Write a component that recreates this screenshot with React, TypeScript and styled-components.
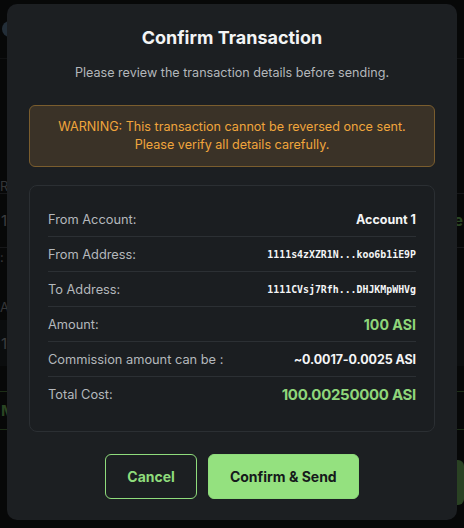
import React from 'react';
import styled, { createGlobalStyle } from 'styled-components';

const GlobalStyle = createGlobalStyle`
  html, body {
    margin: 0;
    padding: 0;
    background: #0f1113;
    font-family: Inter, 'Noto Sans', sans-serif;
  }
  * {
    box-sizing: border-box;
  }
`;

// page behind the dialog, mostly hidden
const Page = styled.div`
  width: 464px;
  height: 528px;
  background: #131517;
  overflow: hidden;
`;

const PageHeader = styled.div`
  height: 59px;
  display: flex;
  align-items: center;
  padding: 0 0 0 2px;
  border-bottom: 1px solid #2a2d31;
`;

const Logo = styled.div`
  width: 16px;
  height: 16px;
  border-radius: 50%;
  background: #5d7a94;
`;

const PageForm = styled.div`
  display: flex;
  flex-direction: column;
  padding: 120px 0 0 0;
`;

const FieldLabel = styled.div<{ $gap?: number }>`
  font-size: 13px;
  line-height: 14px;
  color: #8a8e93;
  margin-top: ${(p) => p.$gap ?? 0}px;
`;

const Field = styled.div<{ $accent?: boolean; $filled?: boolean; $h?: number; $gap?: number }>`
  height: ${(p) => p.$h ?? 55}px;
  margin-top: ${(p) => p.$gap ?? 0}px;
  display: flex;
  align-items: center;
  justify-content: space-between;
  padding: 0 1px;
  border-top: 1px solid ${(p) => (p.$filled ? 'transparent' : p.$accent ? '#4d7a3e' : '#3a3d42')};
  border-bottom: 1px solid ${(p) => (p.$filled ? 'transparent' : p.$accent ? '#4d7a3e' : '#3a3d42')};
  background: ${(p) => (p.$filled ? '#1f2226' : 'transparent')};
  color: #9aa0a6;
  font-size: 15px;
`;

const FieldAccent = styled.span`
  color: #6fb65c;
  font-weight: 700;
`;

const PageFooter = styled.div`
  display: flex;
  justify-content: flex-end;
  margin-top: 30px;
`;

const PageButton = styled.div`
  width: 120px;
  height: 45px;
  border-radius: 6px;
  background: #6fae5c;
`;

const Overlay = styled.div`
  position: fixed;
  inset: 0;
  background: rgba(0, 0, 0, 0.62);
  display: flex;
  justify-content: center;
  align-items: flex-start;
  padding-top: 4px;
`;

const Dialog = styled.div`
  width: 450px;
  background: #1c1f22;
  border-radius: 10px;
  padding: 22px 22px 21px;
  display: flex;
  flex-direction: column;
  align-items: stretch;
  color: #f1f2f3;
`;

const Title = styled.h2`
  margin: 0;
  font-size: 18px;
  line-height: 24px;
  font-weight: 700;
  text-align: center;
  color: #f3f4f5;
`;

const Subtitle = styled.p`
  margin: 14px 0 0;
  font-size: 12.6px;
  line-height: 18px;
  text-align: center;
  color: #b3b7bb;
`;

const Warning = styled.div`
  margin-top: 23px;
  padding: 12px 16px;
  border: 1px solid #7a5d2e;
  border-radius: 6px;
  background: #3a3227;
  color: #f0a53c;
  font-size: 12.6px;
  line-height: 18px;
  text-align: center;
`;

const Details = styled.div`
  margin-top: 18px;
  padding: 16px 18px 19px;
  border: 1px solid #2b2f33;
  border-radius: 8px;
  background: #1b1e21;
`;

const Row = styled.div`
  height: 35px;
  display: flex;
  align-items: center;
  justify-content: space-between;
  border-bottom: 1px solid #2c3034;

  &:last-child {
    height: 35px;
    border-bottom: none;
  }
`;

const Label = styled.span`
  font-size: 12.8px;
  color: #b4b8bc;
`;

const Value = styled.span<{ $tone?: 'plain' | 'green'; $size?: number; $mono?: boolean; $track?: number }>`
  font-size: ${(p) => p.$size ?? 12.5}px;
  letter-spacing: ${(p) => p.$track ?? 0}px;
  font-weight: 700;
  color: ${(p) => (p.$tone === 'green' ? '#8fd67a' : '#f4f5f6')};
  font-family: ${(p) =>
    p.$mono ? "'DejaVu Sans Mono', 'Liberation Mono', monospace" : 'inherit'};
`;

const Actions = styled.div`
  margin-top: 22px;
  display: flex;
  justify-content: center;
  gap: 11px;
`;

const Button = styled.button<{ $primary?: boolean }>`
  height: 45px;
  padding: 0 21px;
  border-radius: 6px;
  font-family: Inter, 'Noto Sans', sans-serif;
  font-size: 14px;
  font-weight: 700;
  cursor: pointer;
  border: 1px solid #8fdc7c;
  background: ${(p) => (p.$primary ? '#94e17f' : 'transparent')};
  color: ${(p) => (p.$primary ? '#16191b' : '#8fdc7c')};
`;

type Detail = {
  label: string;
  value: string;
  tone?: 'plain' | 'green';
  size?: number;
  mono?: boolean;
  track?: number;
};

const details: Detail[] = [
  { label: 'From Account:', value: 'Account 1' },
  { label: 'From Address:', value: '1111s4zXZR1N...koo6b1iE9P', mono: true, size: 9.9 },
  { label: 'To Address:', value: '1111CVsj7Rfh...DHJKMpWHVg', mono: true, size: 9.9 },
  { label: 'Amount:', value: '100 ASI', tone: 'green', size: 14.2 },
  { label: 'Commission amount can be :', value: '~0.0017-0.0025 ASI', track: -0.1 },
  { label: 'Total Cost:', value: '100.00250000 ASI', tone: 'green', size: 15, track: -0.3 },
];

const App = () => (
  <>
    <GlobalStyle />
    <Page>
      <PageHeader>
        <Logo />
      </PageHeader>
      <PageForm>
        <FieldLabel>Recipient</FieldLabel>
        <Field>
          <span>1111</span>
          <FieldAccent>e</FieldAccent>
        </Field>
        <FieldLabel $gap={2}>: </FieldLabel>
        <FieldLabel $gap={36}>Amount</FieldLabel>
        <Field $filled $h={46} $gap={6}>
          <span>100</span>
        </Field>
        <Field $accent $h={39} $gap={25}>
          <FieldAccent>Max</FieldAccent>
        </Field>
        <PageFooter>
          <PageButton />
        </PageFooter>
      </PageForm>
    </Page>
    <Overlay>
      <Dialog>
        <Title>Confirm Transaction</Title>
        <Subtitle>Please review the transaction details before sending.</Subtitle>
        <Warning>
          WARNING: This transaction cannot be reversed once sent.
          <br />
          Please verify all details carefully.
        </Warning>
        <Details>
          {details.map((d) => (
            <Row key={d.label}>
              <Label>{d.label}</Label>
              <Value $tone={d.tone} $size={d.size} $mono={d.mono} $track={d.track}>
                {d.value}
              </Value>
            </Row>
          ))}
        </Details>
        <Actions>
          <Button>Cancel</Button>
          <Button $primary>Confirm &amp; Send</Button>
        </Actions>
      </Dialog>
    </Overlay>
  </>
);

export default App;
